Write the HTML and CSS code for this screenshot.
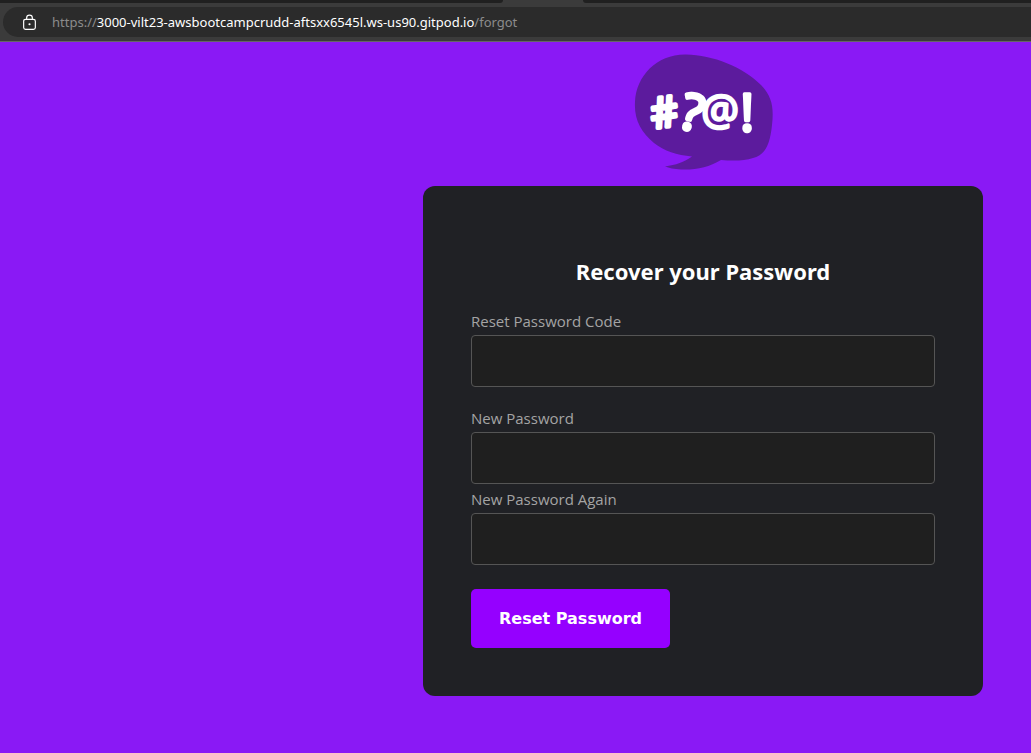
FILE: index.html
```html
<!DOCTYPE html>
<html lang="en">
<head>
<meta charset="utf-8">
<meta name="viewport" content="width=device-width, initial-scale=1">
<title>Recover your Password</title>
<link rel="stylesheet" href="styles.css">
</head>
<body>
<header class="browser">
  <div class="tabs"><span class="tab tab-left"></span><span class="tab tab-right"></span></div>
  <div class="address">
    <svg class="lock" viewBox="0 0 14 16" aria-hidden="true">
      <rect x="1.5" y="5" width="11" height="9.5" rx="1.8"/>
      <path d="M4.3 5V3.7a2.7 2.7 0 0 1 5.4 0V5"/>
      <circle class="keyhole" cx="7" cy="9.7" r="1"/>
    </svg>
    <span class="url">https://<span class="host">3000-vilt23-awsbootcampcrudd-aftsxx6545l.ws-us90.gitpod.io</span>/forgot</span>
  </div>
</header>
<main class="page">
  <div class="recover">
    <svg class="logo" viewBox="0 0 140 117" role="img" aria-label="Logo">
      <path class="bubble" d="M53 .5C80 1 110 13 128 31C139 43 141 53 139 71C137 91 132 101 120 104C111 107 100 107 88 106C76 113 64 116 48 115.500C41 115 36 114 32 112.500C43 111 51 108 59 102.500C44 101 31 97 21 89C8 78 1 66 2 48C3 22 24 0 53 .5Z"/>
      <g class="marks">
        <text class="light" x="31" y="73" font-size="42" stroke-width="4" transform="rotate(-8 31 58)">#</text>
        <text class="light" x="59" y="76" font-size="50" stroke-width="4" transform="rotate(14 59 60)">?</text>
        <text class="light" x="87" y="71" font-size="42" stroke-width="2.500">@</text>
        <text class="light" x="114" y="77" font-size="52" stroke-width="3.500">!</text>
      </g>
    </svg>
    <form class="card">
      <h2 class="title">Recover your Password</h2>
      <div class="field field-code">
        <label for="code">Reset Password Code</label>
        <input id="code" type="text">
      </div>
      <div class="field">
        <label for="password">New Password</label>
        <input id="password" type="password">
      </div>
      <div class="field">
        <label for="again">New Password Again</label>
        <input id="again" type="password">
      </div>
      <button class="submit" type="submit">Reset Password</button>
    </form>
  </div>
</main>
</body>
</html>
```
FILE: styles.css
```css
* { box-sizing: border-box; }
body {
  margin: 0;
  min-height: 100vh;
  background: #8a19f5;
  font-family: "Open Sans", "Noto Sans", sans-serif;
}
.browser {
  background: #3b3b3b;
  border-bottom: 1px solid #666;
  padding-bottom: 4px;
}
.tabs { display: flex; height: 3px; gap: 80px; margin-bottom: 4px; }
.tab { background: #202020; }
.tab-left { width: 503px; border-bottom-right-radius: 3px; }
.tab-right { flex: 1; border-bottom-left-radius: 3px; }
.address {
  display: flex;
  align-items: center;
  gap: 15px;
  height: 30px;
  margin-left: 3px;
  padding-left: 19px;
  background: #2b2b2b;
  border-radius: 15px 0 0 15px;
}
.lock { width: 15px; height: 17px; fill: none; stroke: #fff; stroke-width: 1.1; }
.lock .keyhole { fill: #fff; stroke: none; }
.url {
  color: #8c8c8c;
  font-family: "Noto Sans", "Open Sans", sans-serif;
  font-size: 13px;
  line-height: 20px;
  white-space: nowrap;
}
.host { color: #fff; }
.page { display: flex; justify-content: flex-end; padding: 12px 48px 56px; }
.recover {
  display: flex;
  flex-direction: column;
  align-items: center;
  gap: 15px;
  width: 100%;
  max-width: 560px;
}
.logo { width: 140px; height: 117px; }
.bubble { fill: #5c1b9d; }
.marks {
  fill: #fff;
  stroke: #fff;
  stroke-linejoin: round;
  font-family: "Open Sans", sans-serif;
  text-anchor: middle;
}
.marks .light { font-weight: 400; }
.card {
  width: 100%;
  padding: 69px 48px 48px;
  background: #202125;
  border-radius: 12px;
}
.title {
  margin: 0 0 19px;
  color: #fff;
  font-family: "Noto Sans", "Open Sans", sans-serif;
  font-size: 22px;
  font-weight: 700;
  line-height: 32px;
  text-align: center;
}
.field { display: flex; flex-direction: column; gap: 3px; padding-top: 4px; }
.field-code { margin-bottom: 16px; }
.field label { color: #a4a4a4; font-size: 15px; line-height: 22px; }
.field input {
  width: 100%;
  height: 52px;
  padding: 0 16px;
  color: #fff;
  font: inherit;
  background: #1f1f1f;
  border: 1px solid #555;
  border-radius: 4px;
}
.submit {
  margin-top: 24px;
  padding: 18px 28px;
  color: #fff;
  background: #9500ff;
  border: 0;
  border-radius: 5px;
  font-family: "DejaVu Sans", sans-serif;
  font-size: 16px;
  font-weight: 700;
  line-height: 23px;
}
```
